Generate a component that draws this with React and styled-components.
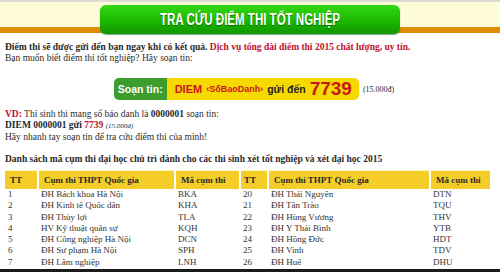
import React from "react";
import styled, { createGlobalStyle } from "styled-components";

const GlobalStyle = createGlobalStyle`
  body {
    margin : 0;
    background : #fff;
    font-family : "Liberation Serif", "Times New Roman", serif;
  }
`;

const Page = styled.div`
  width : 500px;
  height : 272px;
  overflow : hidden;
  box-sizing : border-box;
  border-bottom : 3px solid #1a1a1a;
  font-size : 9.5px;
  color : #2a2a2a;
`;

const Header = styled.div`
  height : 35px;
  box-sizing : border-box;
  border-top : 2px solid #dcdcd4;
  padding-top : 3px;
  background : linear-gradient(to bottom, #fffcd8 0, #fffcd8 25px, #e08c05 25px, #e08c05 31px, #fff 31px);
`;

const Title = styled.div`
  width : 300px;
  height : 29px;
  margin : 0 auto;
  border-radius : 6px;
  background : linear-gradient(to bottom, #34d913 0%, #1ab800 55%, #119600 100%);
  box-shadow : 0 1px 1px rgba(0, 80, 0, 0.5);
  display : flex;
  align-items : center;
  justify-content : center;
  color : #fff;
  font-family : "Liberation Sans", Arial, sans-serif;
  font-weight : bold;
  font-size : 16px;
  text-shadow : 0 1px 1px rgba(0, 60, 0, 0.6);
  white-space : nowrap;
`;

const TitleText = styled.span`
  display : inline-block;
  transform : scaleX(0.72);
`;

const Content = styled.div`
  padding : 7px 5px 0;
`;

const Line = styled.div`
  line-height : 11px;
  white-space : nowrap;
  font-weight : ${p => (p.bold ? "bold" : "normal")};
  margin-top : ${p => p.gap || 0}px;
`;

const Red = styled.span`
  color : #c0102c;
  font-weight : bold;
`;

const Strong = styled.span`
  font-weight : bold;
  color : ${p => p.color || "inherit"};
`;

const Note = styled.span`
  font-size : 7px;
  font-style : italic;
`;

const SmsRow = styled.div`
  display : flex;
  align-items : center;
  justify-content : center;
  gap : 4px;
  margin : 14px 0 0 8px;
`;

const SmsBox = styled.div`
  display : flex;
  height : 22px;
  border-radius : 5px;
  overflow : hidden;
  font-family : "Liberation Sans", Arial, sans-serif;
  font-weight : bold;
`;

const SmsLabel = styled.div`
  background : #3c9c2c;
  color : #fff;
  font-size : 10.5px;
  padding : 0 4px;
  display : flex;
  align-items : center;
`;

const SmsBody = styled.div`
  background : #f6d900;
  display : flex;
  align-items : center;
  gap : 4px;
  padding : 0 7px 0 8px;
`;

const SmsPart = styled.span`
  color : ${p => p.color || "#c81818"};
  font-size : ${p => p.size || 10}px;
`;

const Price = styled.span`
  font-size : 8px;
`;

const Table = styled.table`
  width : 485px;
  margin-top : 5px;
  border-collapse : collapse;
  table-layout : fixed;
  border-top : 1px solid #fff6c8;
  font-size : 9px;
`;

const Th = styled.th`
  background : #f4cd28;
  text-align : left;
  font-weight : bold;
  height : 18px;
  padding : 0 0 0 ${p => p.pad || 5}px;
  border-left : 2px solid #fff;
  &:first-child {
    border-left : none;
  }
`;

const Td = styled.td`
  height : 11.3px;
  line-height : 11.3px;
  padding : 0 0 0 3px;
  white-space : nowrap;
  color : #333;
`;

const left = [
  ["1", "ĐH Bách khoa Hà Nội", "BKA"],
  ["2", "ĐH Kinh tế Quốc dân", "KHA"],
  ["3", "ĐH Thủy lợi", "TLA"],
  ["4", "HV Kỹ thuật quân sự", "KQH"],
  ["5", "ĐH Công nghiệp Hà Nội", "DCN"],
  ["6", "ĐH Sư phạm Hà Nội", "SPH"],
  ["7", "ĐH Lâm nghiệp", "LNH"],
];

const right = [
  ["20", "ĐH Thái Nguyên", "DTN"],
  ["21", "ĐH Tân Trào", "TQU"],
  ["22", "ĐH Hùng Vương", "THV"],
  ["23", "ĐH Y Thái Bình", "YTB"],
  ["24", "ĐH Hồng Đức", "HDT"],
  ["25", "ĐH Vinh", "TDV"],
  ["26", "ĐH Huế", "DHU"],
];

const App = () => {
  return (
    <Page>
      <GlobalStyle />
      <Header>
        <Title>
          <TitleText>TRA CỨU ĐIỂM THI TỐT NGHIỆP</TitleText>
        </Title>
      </Header>
      <Content>
        <Line>
          <Strong>Điểm thi sẽ được gửi đến bạn ngay khi có kết quả.</Strong>{" "}
          <Red>Dịch vụ tổng đài điểm thi 2015 chất lượng, uy tín.</Red>
        </Line>
        <Line>Bạn muốn biết điểm thi tốt nghiệp? Hãy soạn tin:</Line>

        <SmsRow>
          <SmsBox>
            <SmsLabel>Soạn tin:</SmsLabel>
            <SmsBody>
              <SmsPart size={11}>DIEM</SmsPart>
              <SmsPart size={9}>‹SốBaoDanh›</SmsPart>
              <SmsPart color="#222" size={10.5}>gửi đến</SmsPart>
              <SmsPart size={19}>7739</SmsPart>
            </SmsBody>
          </SmsBox>
          <Price>(15.000đ)</Price>
        </SmsRow>

        <Line gap={9}>
          <Red>VD:</Red> Thí sinh thi mang số báo danh là <Strong>0000001</Strong> soạn tin:
        </Line>
        <Line>
          <Strong color="#1a2a3a">DIEM 0000001 gửi</Strong> <Red>7739</Red> <Note>(15.000đ)</Note>
        </Line>
        <Line>Hãy nhanh tay soạn tin để tra cứu điểm thi của mình!</Line>

        <Line bold gap={11}>
          Danh sách mã cụm thi đại học chủ trì dành cho các thi sinh xét tốt nghiệp và xét đại học 2015
        </Line>

        <Table>
          <colgroup>
            <col style={{ width: 33 }} />
            <col style={{ width: 137 }} />
            <col style={{ width: 65 }} />
            <col style={{ width: 28 }} />
            <col style={{ width: 162 }} />
            <col style={{ width: 60 }} />
          </colgroup>
          <thead>
            <tr>
              <Th>TT</Th>
              <Th>Cụm thi THPT Quốc gia</Th>
              <Th>Mã cụm thi</Th>
              <Th pad={3}>TT</Th>
              <Th>Cụm thi THPT Quốc gia</Th>
              <Th>Mã cụm thi</Th>
            </tr>
          </thead>
          <tbody>
            {left.map((row, i) => (
              <tr key={row[0]}>
                <Td>{row[0]}</Td>
                <Td>{row[1]}</Td>
                <Td>{row[2]}</Td>
                <Td>{right[i][0]}</Td>
                <Td>{right[i][1]}</Td>
                <Td>{right[i][2]}</Td>
              </tr>
            ))}
          </tbody>
        </Table>
      </Content>
    </Page>
  );
};

export default App;
